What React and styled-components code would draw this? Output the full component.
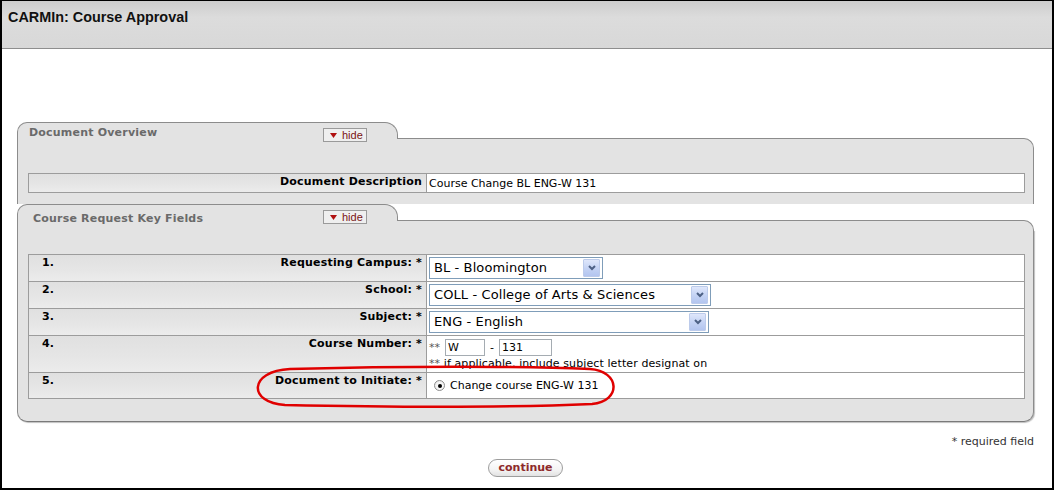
import React from 'react';
import styled, { createGlobalStyle } from 'styled-components';

const GlobalStyle = createGlobalStyle`
  html, body {
    margin: 0;
    padding: 0;
    background: #fff;
  }
  body {
    font-family: "DejaVu Sans", Verdana, sans-serif;
  }
`;

const Frame = styled.div`
  position: relative;
  width: 1054px;
  height: 490px;
  box-sizing: border-box;
  border: 2px solid #000;
  border-top-width: 1px;
  background: #fff;
  overflow: hidden;
`;

const TopBar = styled.header`
  box-sizing: border-box;
  height: 48px;
  padding: 7px 0 0 6px;
  border-bottom: 1px solid #8e8e8e;
  background: linear-gradient(180deg, #cdcdcd 0%, #dcdcdc 35%, #d8d8d8 100%);
`;

const PageTitle = styled.h1`
  margin: 0;
  font: bold 14.4px/18px "Liberation Sans", Arial, sans-serif;
  color: #111;
`;

const Main = styled.main`
  padding: 73px 18px 0 15px;
`;

const Head = styled.div`
  display: flex;
  align-items: flex-end;
`;

const Tab = styled.div`
  display: flex;
  align-items: flex-start;
  box-sizing: border-box;
  width: 381px;
  height: 26px;
  padding: 5px 30px 0 ${(p) => p.$indent}px;
  background: #e3e3e3;
  border: 1px solid #8c8c8c;
  border-bottom: none;
  border-radius: 10px 13px 0 0;
`;

const TabTitle = styled.h2`
  flex: 1;
  margin: ${(p) => p.$drop}px 0 0;
  font: bold 11px/13px "DejaVu Sans", Verdana, sans-serif;
  letter-spacing: 0.2px;
  color: #6a6a6a;
`;

const TabFill = styled.div`
  position: relative;
  flex: 1;
  box-sizing: border-box;
  height: 10px;
  margin-left: -1px;
  background: #e3e3e3;
  border-top: 1px solid #8c8c8c;
  border-right: 1px solid #8c8c8c;
  border-top-right-radius: 10px;
`;

const HideButton = styled.button`
  display: flex;
  align-items: center;
  gap: 5px;
  box-sizing: border-box;
  width: 44px;
  height: 14px;
  padding: 0 0 0 6px;
  background: #efefef;
  border: 1px solid #9a9a9a;
  font: 11px/12px "Liberation Sans", Arial, sans-serif;
  color: #7a1414;
  cursor: pointer;
`;

const Body = styled.div`
  padding: ${(p) => p.$top}px 8px ${(p) => p.$bottom}px 10px;
  background: #e3e3e3;
  border-left: 1px solid #8c8c8c;
  border-right: 1px solid #8c8c8c;
  ${(p) =>
    p.$last &&
    `
    border-bottom: 1px solid #7a7a7a;
    border-radius: 0 0 10px 10px;
    box-shadow: 1px 1px 1px rgba(0, 0, 0, 0.25);
  `}
`;

const Grid = styled.div`
  display: grid;
  grid-template-columns: 398px 1fr;
  border-top: 1px solid #9c9c9c;
  border-left: 1px solid #9c9c9c;
`;

const LabelCell = styled.div`
  display: flex;
  justify-content: space-between;
  box-sizing: border-box;
  height: ${(p) => p.$h}px;
  padding: ${(p) => p.$pad}px 4px 0 13px;
  border-right: 1px solid #9c9c9c;
  border-bottom: 1px solid #9c9c9c;
  background: linear-gradient(180deg, #e0e0e0 0%, #e6e6e6 60%, #ececec 100%);
  font: bold 11px/13px "DejaVu Sans", Verdana, sans-serif;
  letter-spacing: 0.2px;
  color: #000;
`;

const ValueCell = styled.div`
  box-sizing: border-box;
  height: ${(p) => p.$h}px;
  padding: ${(p) => p.$pad}px 2px 0 2px;
  border-right: 1px solid #9c9c9c;
  border-bottom: 1px solid #9c9c9c;
  background: #fff;
  font: 11px/13px "DejaVu Sans", Verdana, sans-serif;
  color: #000;
`;

const SelectBox = styled.div`
  display: flex;
  align-items: center;
  box-sizing: border-box;
  width: ${(p) => p.$w}px;
  height: 22px;
  padding: 0 2px 0 4px;
  border: 1px solid #7f9db9;
  background: #fff;
  font: 13px/16px "DejaVu Sans", Verdana, sans-serif;
  letter-spacing: 0.1px;
  color: #000;
`;

const SelectText = styled.span`
  flex: 1;
  white-space: nowrap;
`;

const DropArrow = styled.span`
  display: flex;
  align-items: center;
  justify-content: center;
  width: 17px;
  height: 18px;
  border: 1px solid #bccbeb;
  border-radius: 1px;
  box-sizing: border-box;
  background: linear-gradient(180deg, #dfe7fb 0%, #c3d2f4 55%, #b3c5ef 100%);
`;

const NumberLine = styled.div`
  display: flex;
  align-items: center;
  height: 17px;
  color: #555;
`;

const Dash = styled.span`
  margin: 0 5px;
  color: #000;
`;

const SmallInput = styled.span`
  box-sizing: border-box;
  width: ${(p) => p.$w}px;
  height: 17px;
  margin-left: ${(p) => p.$gap}px;
  padding: 1px 2px 0;
  border: 1px solid #a5acb2;
  background: #fff;
  font: 11px/14px "DejaVu Sans", Verdana, sans-serif;
  color: #000;
`;

const Hint = styled.div`
  margin-top: 1px;
  color: #000;
  white-space: nowrap;
  letter-spacing: 0.1px;

  span {
    color: #555;
  }
`;

const RadioRow = styled.label`
  display: flex;
  align-items: center;
  gap: 5px;
  padding-left: 5px;
`;

const Radio = styled.span`
  display: flex;
  align-items: center;
  justify-content: center;
  box-sizing: border-box;
  width: 11px;
  height: 11px;
  border-radius: 50%;
  border: 1px solid #8d8d8d;
  background: radial-gradient(circle at 60% 60%, #fff 0%, #f2f2f2 60%, #dcdcdc 100%);

  &::after {
    content: '';
    width: 4px;
    height: 4px;
    border-radius: 50%;
    background: #000;
  }
`;

const Footer = styled.div`
  display: flex;
  flex-direction: column;
  align-items: center;
  padding: 13px 18px 0 15px;
`;

const RequiredNote = styled.p`
  align-self: flex-end;
  margin: 0;
  font: 11px/13px "DejaVu Sans", Verdana, sans-serif;
  color: #333;
`;

const ContinueButton = styled.button`
  box-sizing: border-box;
  width: 75px;
  height: 18px;
  margin-top: 11px;
  padding: 0;
  border: 1px solid #9d9d9d;
  border-radius: 9px;
  background: linear-gradient(180deg, #ffffff 0%, #f4f4f4 60%, #e2e2e2 100%);
  font: bold 11px/14px "DejaVu Sans", Verdana, sans-serif;
  color: #8e2a2a;
  cursor: pointer;
`;

const Markup = styled.svg`
  position: absolute;
  left: -2px;
  top: -1px;
  pointer-events: none;
`;

const Caret = () => (
  <svg width="7" height="5" viewBox="0 0 7 5">
    <path d="M0 0 H7 L3.5 5 Z" fill="#b01010" />
  </svg>
);

const Chevron = () => (
  <svg width="8" height="6" viewBox="0 0 8 6">
    <path d="M1 1 L4 4 L7 1" fill="none" stroke="#4d6185" strokeWidth="2" />
  </svg>
);

const Select = ({ width, children }) => (
  <SelectBox $w={width}>
    <SelectText>{children}</SelectText>
    <DropArrow>
      <Chevron />
    </DropArrow>
  </SelectBox>
);

const TabHead = ({ title, indent, drop }) => (
  <Head>
    <Tab $indent={indent}>
      <TabTitle $drop={drop}>{title}</TabTitle>
      <HideButton type="button">
        <Caret />
        hide
      </HideButton>
    </Tab>
    <TabFill />
  </Head>
);

// label rows of the key fields table: row height and value-cell top padding
const keyFields = [
  { n: '1.', label: 'Requesting Campus: *', h: 27, valuePad: 2 },
  { n: '2.', label: 'School: *', h: 27, valuePad: 2 },
  { n: '3.', label: 'Subject: *', h: 27, valuePad: 2 },
  { n: '4.', label: 'Course Number: *', h: 37, valuePad: 3 },
  { n: '5.', label: 'Document to Initiate: *', h: 26, valuePad: 6 },
];

const renderValue = (i) => {
  switch (i) {
    case 0:
      return <Select width={174}>BL - Bloomington</Select>;
    case 1:
      return <Select width={282}>COLL - College of Arts &amp; Sciences</Select>;
    case 2:
      return <Select width={280}>ENG - English</Select>;
    case 3:
      return (
        <>
          <NumberLine>
            <span>**</span>
            <SmallInput $w={40} $gap={5}>W</SmallInput>
            <Dash>-</Dash>
            <SmallInput $w={53} $gap={0}>131</SmallInput>
          </NumberLine>
          <Hint>
            <span>**</span> if applicable, include subject letter designat on
          </Hint>
        </>
      );
    default:
      return (
        <RadioRow>
          <Radio />
          Change course ENG-W 131
        </RadioRow>
      );
  }
};

export default function App() {
  return (
    <>
      <GlobalStyle />
      <Frame>
        <TopBar>
          <PageTitle>CARMIn: Course Approval</PageTitle>
        </TopBar>

        <Main>
          <TabHead title="Document Overview" indent={11} drop={-2} />
          <Body $top={25} $bottom={11}>
            <Grid>
              <LabelCell $h={19} $pad={1}>
                <span />
                <span>Document Description</span>
              </LabelCell>
              <ValueCell $h={19} $pad={3}>
                Course Change BL ENG-W 131
              </ValueCell>
            </Grid>
          </Body>

          <TabHead title="Course Request Key Fields" indent={15} drop={2} />
          <Body $top={24} $bottom={22} $last>
            <Grid>
              {keyFields.map((row, i) => (
                <React.Fragment key={row.n}>
                  <LabelCell $h={row.h} $pad={1}>
                    <span>{row.n}</span>
                    <span>{row.label}</span>
                  </LabelCell>
                  <ValueCell $h={row.h} $pad={row.valuePad}>
                    {renderValue(i)}
                  </ValueCell>
                </React.Fragment>
              ))}
            </Grid>
          </Body>
        </Main>

        <Footer>
          <RequiredNote>* required field</RequiredNote>
          <ContinueButton type="button">continue</ContinueButton>
        </Footer>

        <Markup width="1054" height="490" viewBox="0 0 1054 490">
          <path
            d="M290 369 C400 366 520 366 590 369 C620 371 622 401 592 404 C500 408 380 407 285 405 C248 403 248 371 290 369 Z"
            fill="none"
            stroke="#e00000"
            strokeWidth="2.5"
          />
        </Markup>
      </Frame>
    </>
  );
}
